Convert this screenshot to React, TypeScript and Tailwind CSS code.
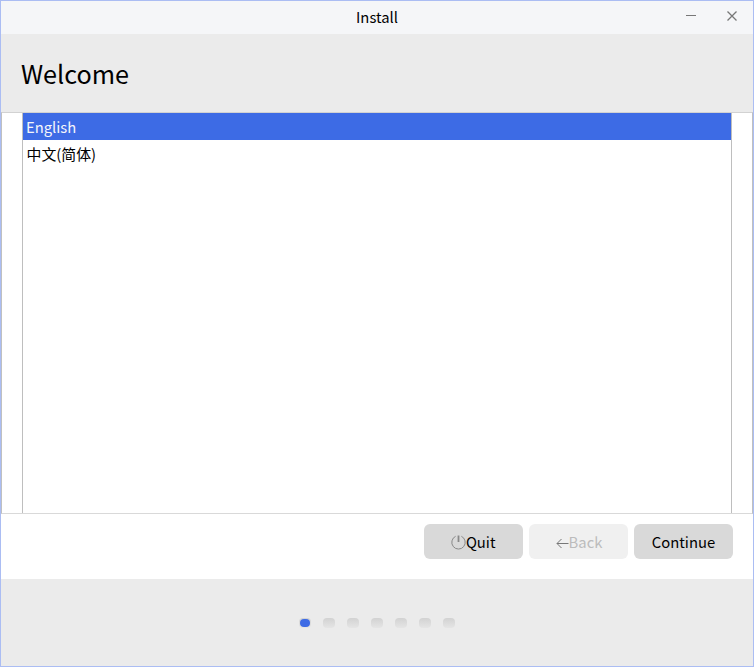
import React from "react";

const languages = ["English", "中文(简体)"];
const steps = [0, 1, 2, 3, 4, 5, 6];

function TitleBar() {
  return (
    <header className="grid h-[33px] shrink-0 grid-cols-[1fr_auto_1fr] bg-[#f5f6f8]">
      <span />
      <h1 className="text-[14.8px] leading-[32px]">Install</h1>
      <div className="flex justify-end gap-[29px] pr-[15px] pt-[9px]">
        <svg width="12" height="12" viewBox="0 0 12 12" stroke="#777" fill="none">
          <path d="M1 5.5H11" />
        </svg>
        <svg width="12" height="12" viewBox="0 0 12 12" stroke="#777" strokeWidth="1.3" fill="none">
          <path d="M1.5 1.5L10.5 10.5M10.5 1.5L1.5 10.5" />
        </svg>
      </div>
    </header>
  );
}

function LanguageList() {
  return (
    <main className="flex h-[402px] shrink-0 border border-t-[#d2d2d2] border-b-[#d9d9d9] border-x-[#c0c0c0] bg-white px-5">
      <ul className="flex-1 border-x border-[#bebebe]">
        {languages.map((name, i) => (
          <li
            key={name}
            className={
              i === 0
                ? "h-[27px] bg-[#3d6be5] pl-[3px] text-[14.8px] leading-[27px] text-[#f5f6fa]"
                : "h-[27px] pl-[3.5px] text-[14.9px] leading-[27px]"
            }
          >
            {name}
          </li>
        ))}
      </ul>
    </main>
  );
}

function Actions() {
  const base = "flex h-[35px] w-[99px] items-center justify-center rounded-[6px] text-[14.8px] leading-[35px]";
  return (
    <div className="flex h-[65px] shrink-0 justify-end gap-[6px] bg-white pr-5 pt-[10px]">
      <button className={base + " bg-[#d9d9d9] pr-[0.6px]"}>
        <svg className="mt-[2px]" width="15" height="15" viewBox="0 0 15 15" fill="none" stroke="#888">
          <path d="M4.6 1.3A6.7 6.7 0 1 0 10.4 1.3" />
          <path d="M7.5 0.5V7" strokeWidth="1.8" />
        </svg>
        Quit
      </button>
      <button className={base + " bg-[#f0f0f0] pl-px text-[#bcbcbc]"}>
        <svg className="mt-[2px]" width="13" height="12" viewBox="0 0 13 12" fill="none" stroke="#777">
          <path d="M12.5 6.5H1M5.5 2L1 6.5L5.5 11" />
        </svg>
        Back
      </button>
      <button className={base + " bg-[#d9d9d9]"}>Continue</button>
    </div>
  );
}

function Steps() {
  return (
    <footer className="flex flex-1 justify-center gap-3 bg-[#ebebeb] pt-[39px]">
      {steps.map((step) => (
        <span key={step} className="flex h-[10px] w-3 justify-center rounded-[4px] bg-linear-to-b from-[#d2d2d2] to-[#e5e5e5]">
          {step === 0 && <span className="mt-[1px] h-[8px] w-[10px] rounded-[4px] bg-[#3d6be5]" />}
        </span>
      ))}
    </footer>
  );
}

export default function App() {
  return (
    <div className="flex h-[667px] w-[754px] flex-col overflow-hidden border border-[#abbdf3] bg-[#ebebeb] font-['Noto_Sans_CJK_SC','Noto_Sans',sans-serif] text-black">
      <TitleBar />
      <div className="h-[78px] shrink-0 pl-5">
        <h2 className="text-[25.2px] leading-[79px]">Welcome</h2>
      </div>
      <LanguageList />
      <Actions />
      <Steps />
    </div>
  );
}
